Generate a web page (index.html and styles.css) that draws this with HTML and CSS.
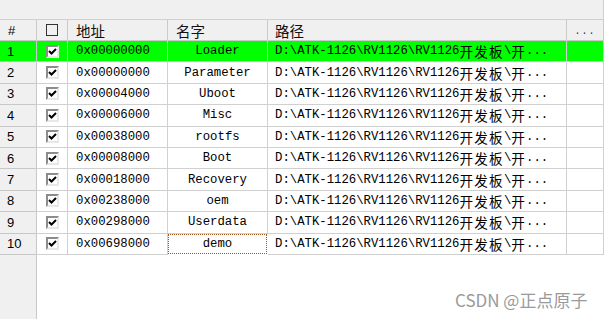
FILE: index.html
```html
<!DOCTYPE html>
<html>
<head>
<meta charset="utf-8">
<link rel="stylesheet" href="styles.css">
</head>
<body>
<div class="page">
  <div class="topbar"></div>
  <div class="table">
    <div class="row head">
      <div class="c num">#</div>
      <div class="c chk"><span class="hbox"></span></div>
      <div class="c addr"><span class="cjkh">地址</span></div>
      <div class="c name left"><span class="cjkh">名字</span></div>
      <div class="c path"><span class="cjkh">路径</span></div>
      <div class="c more">...</div>
    </div>
    <div class="row sel">
      <div class="c num">1</div>
      <div class="c chk"><span class="box"><svg viewBox="0 0 9 9" width="9" height="9"><path d="M1 4 L3.5 6.5 L8 2" fill="none" stroke="#000" stroke-width="2"/></svg></span></div>
      <div class="c addr">0x00000000</div>
      <div class="c name">Loader</div>
      <div class="c path">D:\ATK-1126\RV1126\RV1126<span class="cjk">开发板</span>\<span class="cjk">开</span>...</div>
      <div class="c more"></div>
    </div>
    <div class="row">
      <div class="c num">2</div>
      <div class="c chk"><span class="box"><svg viewBox="0 0 9 9" width="9" height="9"><path d="M1 4 L3.5 6.5 L8 2" fill="none" stroke="#000" stroke-width="2"/></svg></span></div>
      <div class="c addr">0x00000000</div>
      <div class="c name">Parameter</div>
      <div class="c path">D:\ATK-1126\RV1126\RV1126<span class="cjk">开发板</span>\<span class="cjk">开</span>...</div>
      <div class="c more"></div>
    </div>
    <div class="row">
      <div class="c num">3</div>
      <div class="c chk"><span class="box"><svg viewBox="0 0 9 9" width="9" height="9"><path d="M1 4 L3.5 6.5 L8 2" fill="none" stroke="#000" stroke-width="2"/></svg></span></div>
      <div class="c addr">0x00004000</div>
      <div class="c name">Uboot</div>
      <div class="c path">D:\ATK-1126\RV1126\RV1126<span class="cjk">开发板</span>\<span class="cjk">开</span>...</div>
      <div class="c more"></div>
    </div>
    <div class="row">
      <div class="c num">4</div>
      <div class="c chk"><span class="box"><svg viewBox="0 0 9 9" width="9" height="9"><path d="M1 4 L3.5 6.5 L8 2" fill="none" stroke="#000" stroke-width="2"/></svg></span></div>
      <div class="c addr">0x00006000</div>
      <div class="c name">Misc</div>
      <div class="c path">D:\ATK-1126\RV1126\RV1126<span class="cjk">开发板</span>\<span class="cjk">开</span>...</div>
      <div class="c more"></div>
    </div>
    <div class="row">
      <div class="c num">5</div>
      <div class="c chk"><span class="box"><svg viewBox="0 0 9 9" width="9" height="9"><path d="M1 4 L3.5 6.5 L8 2" fill="none" stroke="#000" stroke-width="2"/></svg></span></div>
      <div class="c addr">0x00038000</div>
      <div class="c name">rootfs</div>
      <div class="c path">D:\ATK-1126\RV1126\RV1126<span class="cjk">开发板</span>\<span class="cjk">开</span>...</div>
      <div class="c more"></div>
    </div>
    <div class="row">
      <div class="c num">6</div>
      <div class="c chk"><span class="box"><svg viewBox="0 0 9 9" width="9" height="9"><path d="M1 4 L3.5 6.5 L8 2" fill="none" stroke="#000" stroke-width="2"/></svg></span></div>
      <div class="c addr">0x00008000</div>
      <div class="c name">Boot</div>
      <div class="c path">D:\ATK-1126\RV1126\RV1126<span class="cjk">开发板</span>\<span class="cjk">开</span>...</div>
      <div class="c more"></div>
    </div>
    <div class="row">
      <div class="c num">7</div>
      <div class="c chk"><span class="box"><svg viewBox="0 0 9 9" width="9" height="9"><path d="M1 4 L3.5 6.5 L8 2" fill="none" stroke="#000" stroke-width="2"/></svg></span></div>
      <div class="c addr">0x00018000</div>
      <div class="c name">Recovery</div>
      <div class="c path">D:\ATK-1126\RV1126\RV1126<span class="cjk">开发板</span>\<span class="cjk">开</span>...</div>
      <div class="c more"></div>
    </div>
    <div class="row">
      <div class="c num">8</div>
      <div class="c chk"><span class="box"><svg viewBox="0 0 9 9" width="9" height="9"><path d="M1 4 L3.5 6.5 L8 2" fill="none" stroke="#000" stroke-width="2"/></svg></span></div>
      <div class="c addr">0x00238000</div>
      <div class="c name">oem</div>
      <div class="c path">D:\ATK-1126\RV1126\RV1126<span class="cjk">开发板</span>\<span class="cjk">开</span>...</div>
      <div class="c more"></div>
    </div>
    <div class="row">
      <div class="c num">9</div>
      <div class="c chk"><span class="box"><svg viewBox="0 0 9 9" width="9" height="9"><path d="M1 4 L3.5 6.5 L8 2" fill="none" stroke="#000" stroke-width="2"/></svg></span></div>
      <div class="c addr">0x00298000</div>
      <div class="c name">Userdata</div>
      <div class="c path">D:\ATK-1126\RV1126\RV1126<span class="cjk">开发板</span>\<span class="cjk">开</span>...</div>
      <div class="c more"></div>
    </div>
    <div class="row">
      <div class="c num">10</div>
      <div class="c chk"><span class="box"><svg viewBox="0 0 9 9" width="9" height="9"><path d="M1 4 L3.5 6.5 L8 2" fill="none" stroke="#000" stroke-width="2"/></svg></span></div>
      <div class="c addr">0x00698000</div>
      <div class="c name focus">demo</div>
      <div class="c path">D:\ATK-1126\RV1126\RV1126<span class="cjk">开发板</span>\<span class="cjk">开</span>...</div>
      <div class="c more"></div>
    </div>
  </div>
  <div class="filler"><div class="gutter"></div></div>
  <div class="mark">CSDN @正点原子</div>
</div>
</body>
</html>
```
FILE: styles.css
```css
html, body {
  margin: 0;
  padding: 0;
  background: #ffffff;
}
.page {
  position: relative;
  width: 607px;
  height: 319px;
  display: flex;
  flex-direction: column;
  overflow: hidden;
  font-family: "Liberation Mono", monospace;
  font-size: 12.3px;
  color: #000;
}
.topbar {
  width: 603px;
  height: 19px;
  background: #f0f0f0;
  border-bottom: 1px solid #cfcfcf;
  border-right: 1px solid #cfcfcf;
  flex: none;
}
.table {
  width: 604px;
  flex: none;
}
.row {
  display: grid;
  grid-template-columns: 37px 31px 100px 100px 299px 37px;
  height: 21.4px;
}
.row.head {
  height: 21px;
}
.c {
  border-right: 1px solid #d0d0d0;
  border-bottom: 1px solid #d0d0d0;
  display: flex;
  align-items: center;
  white-space: nowrap;
  overflow: hidden;
  box-sizing: border-box;
}
.head .c {
  background: #f0f0f0;
  border-color: #cacaca;
}
.num {
  background: #f0f0f0;
  padding-left: 7px;
  font-family: "Liberation Sans", "DejaVu Sans", sans-serif;
  font-size: 13px;
  border-color: #c8c8c8;
}
.head .num {
  padding-left: 8px;
}
.chk {
  justify-content: center;
}
.addr {
  padding-left: 8px;
}
.name {
  justify-content: center;
}
.name.left {
  justify-content: flex-start;
  padding-left: 8px;
}
.path {
  padding-left: 7px;
}
.more {
  justify-content: center;
}
.head .more {
  align-items: flex-end;
  padding-bottom: 3px;
  font-size: 10px;
  letter-spacing: 1px;
  color: #333;
}
.sel .c {
  background: #00ff00;
}
.cjkh {
  font-family: "Noto Sans CJK SC", sans-serif;
  font-size: 14.5px;
  color: #111;
}
.cjk {
  font-family: "Noto Sans CJK SC", sans-serif;
  font-size: 13.6px;
  letter-spacing: 1.2px;
}
.hbox {
  width: 10px;
  height: 10px;
  border: 1px solid #333;
  background: transparent;
}
.box {
  width: 9px;
  height: 9px;
  border: 2px solid;
  border-color: #8c8c8c #e8e8e8 #e8e8e8 #8c8c8c;
  background: #fff;
  display: flex;
  align-items: center;
  justify-content: center;
}
.box svg {
  display: block;
}
.focus {
  border: 1px dotted #a4561a;
  margin: 0 1px 1px 0;
  height: calc(100% - 1px);
}
.filler {
  flex: 1;
  display: flex;
}
.gutter {
  width: 36px;
  background: #f0f0f0;
  border-right: 1px solid #c8c8c8;
}
.mark {
  position: absolute;
  left: 455px;
  top: 287px;
  font-family: "Noto Sans CJK SC", "Liberation Sans", sans-serif;
  font-size: 17px;
  color: #9a9a9a;
  white-space: nowrap;
}
```
